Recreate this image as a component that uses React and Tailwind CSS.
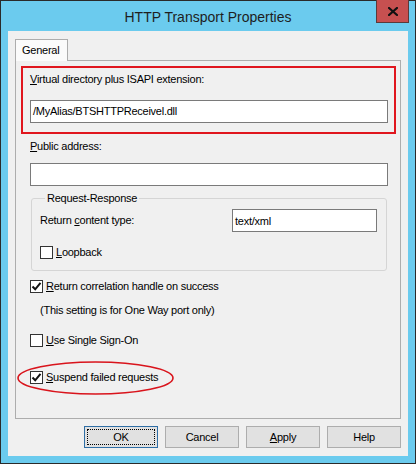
import React from 'react'

const font = { fontFamily: '"Liberation Sans", Arial, sans-serif' }

const Mn = ({ children }) => <span className="underline underline-offset-[1px] decoration-[1px]">{children}</span>

const CheckBox = ({ checked }) => (
  <div className="w-[13px] h-[13px] shrink-0 border border-[#333333] bg-white flex items-center justify-center">
    {checked && (
      <svg width="11" height="11" viewBox="0 0 11 11">
        <path d="M1.5 5.5 L4.2 8.3 L9.5 1.8" fill="none" stroke="#111" strokeWidth="2" />
      </svg>
    )}
  </div>
)

const CheckRow = ({ checked, children, className = '' }) => (
  <div className={`flex items-center gap-[3px] h-[13px] ${className}`}>
    <CheckBox checked={checked} />
    <span className="leading-[13px]">{children}</span>
  </div>
)

const Button = ({ children, primary }) => (
  <div
    className={`relative w-[74px] h-[22px] flex items-center justify-center bg-[#e1e1e1] border ${
      primary ? 'border-[#2f6ea5]' : 'border-[#adadad]'
    }`}
  >
    {primary && <div className="absolute inset-[2px] border border-dotted border-black" />}
    <span className="leading-[13px]">{children}</span>
  </div>
)

export default function App() {
  return (
    <div className="w-[416px] h-[464px] bg-[#2a2a2a] p-px text-[11px] tracking-[-0.25px] text-black" style={font}>
      <div className="h-full bg-[#6bcbee] flex flex-col px-[7px] pb-[7px]">
        {/* Title bar */}
        <div className="relative h-[30px] flex items-center justify-center">
          <span className="text-[14px] tracking-normal text-[#1e1e1e] pt-[2px]">HTTP Transport Properties</span>
          <div className="absolute right-[-1px] top-[-1px] w-[33px] h-[23px] bg-[#c75050] border border-[#5a3a3a] border-t-0 flex items-center justify-center">
            <svg width="10" height="9" viewBox="0 0 10 9">
              <path d="M1 1 L9 8 M9 1 L1 8" stroke="#111" strokeWidth="2.2" strokeLinecap="square" />
            </svg>
          </div>
        </div>

        {/* Content */}
        <div className="flex-1 bg-[#f0f0f0] flex flex-col px-[7px] pt-[8px] pb-[8px]">
          <div className="flex">
            <div className="relative z-10 -mb-px w-[53px] h-[22px] bg-[#fbfbfb] border border-b-0 border-[#adadad] flex items-center pl-[6px]">
              <span className="leading-[13px]">General</span>
            </div>
          </div>

          {/* Tab panel */}
          <div className="flex-1 border border-[#adadad] bg-[#f0f0f0] pl-[14px] pt-[5px]">
            {/* Highlighted group */}
            <div className="ml-[-9px] w-[375px] border-2 border-[#e0161e] px-[7px] pt-[5px] pb-[9px]">
              <div className="leading-[13px]">
                <Mn>V</Mn>irtual directory plus ISAPI extension:
              </div>
              <div className="mt-[14px] w-[358px] h-[23px] border border-[#7a7a7a] bg-white flex items-center pl-[2px]">
                <span className="leading-[13px]">/MyAlias/BTSHTTPReceivel.dll</span>
              </div>
            </div>

            <div className="mt-[6px] leading-[13px]">
              <Mn>P</Mn>ublic address:
            </div>
            <div className="mt-[10px] w-[358px] h-[23px] border border-[#7a7a7a] bg-white" />

            {/* Request-Response group */}
            <fieldset className="mt-[6px] ml-px w-[356px] border border-[#d5d5d5] rounded-[3px] pl-[8px] pr-[9px] pb-[11px]">
              <legend className="ml-[5px] px-[2px] leading-[13px]">Request-Response</legend>
              <div className="mt-[4px] flex items-center justify-between">
                <span className="leading-[13px]">
                  Return <Mn>c</Mn>ontent type:
                </span>
                <div className="w-[145px] h-[23px] border border-[#7a7a7a] bg-white pl-[2px] pt-[3px]">
                  <span className="leading-[13px]">text/xml</span>
                </div>
              </div>
              <CheckRow className="mt-[14px]">
                <Mn>L</Mn>oopback
              </CheckRow>
            </fieldset>

            <CheckRow checked className="mt-[9px]">
              <Mn>R</Mn>eturn correlation handle on success
            </CheckRow>
            <div className="mt-[11px] ml-[10px] leading-[13px]">(This setting is for One Way port only)</div>

            <CheckRow className="mt-[17px]">
              <Mn>U</Mn>se Single Sign-On
            </CheckRow>

            <div className="relative mt-[24px]">
              <CheckRow checked>
                <Mn>S</Mn>uspend failed requests
              </CheckRow>
              <svg className="absolute left-[-13px] top-[-10px]" width="158" height="35" viewBox="0 0 158 35">
                <ellipse cx="78.5" cy="17" rx="77.5" ry="16" fill="none" stroke="#d9141c" strokeWidth="1.6" />
              </svg>
            </div>
          </div>

          {/* Buttons */}
          <div className="mt-[7px] flex justify-end gap-[7px]">
            <Button primary>OK</Button>
            <Button>Cancel</Button>
            <Button>
              <Mn>A</Mn>pply
            </Button>
            <Button>Help</Button>
          </div>
        </div>
      </div>
    </div>
  )
}
